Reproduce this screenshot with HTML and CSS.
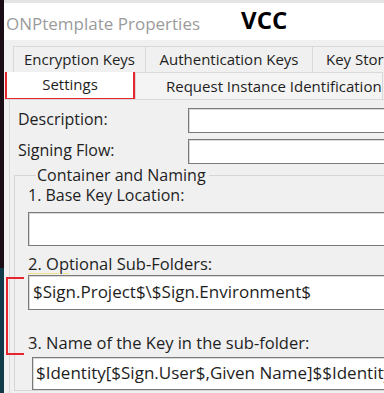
FILE: index.html
```html
<!DOCTYPE html>
<html lang="en">
<head>
    <meta charset="UTF-8">
    <title>ONPtemplate Properties</title>
    <link rel="stylesheet" href="styles.css">
</head>
<body>
    <div class="window">
        <div class="titlebar">
            <span class="title">ONPtemplate Properties</span>
            <span class="tag">VCC</span>
        </div>

        <div class="tabs">
            <div class="tab-row back">
                <div class="tab t1">Encryption Keys</div>
                <div class="tab t2">Authentication Keys</div>
                <div class="tab t3">Key Storage</div>
            </div>
            <div class="tab-row front">
                <div class="tab active">Settings</div>
                <div class="tab t4">Request Instance Identification</div>
            </div>
        </div>

        <div class="panel">
            <div class="field">
                <label class="lbl">Description:</label>
                <div class="input short"></div>
            </div>
            <div class="field">
                <label class="lbl">Signing Flow:</label>
                <div class="input short"></div>
            </div>

            <fieldset class="group">
                <legend>Container and Naming</legend>
                <div class="lbl l1">1. Base Key Location:</div>
                <div class="input i1"></div>

                <div class="lbl l2"><span class="mark">2. Op</span>tional Sub-Folders:</div>
                <div class="input i2">$Sign.Project$\$Sign.Environment$</div>

                <div class="lbl l3">3. Name of the Key in the sub-folder:</div>
                <div class="input i3">$Identity[$Sign.User$,Given Name]$$Identity[$Sign.User$,Surname]$</div>

                <!-- red bracket drawn over the form -->
                <div class="bracket"></div>
            </fieldset>
        </div>
    </div>
</body>
</html>
```

FILE: styles.css
```css
* {
    margin: 0;
    padding: 0;
    box-sizing: border-box;
}

html, body {
    width: 384px;
    height: 393px;
    overflow: hidden;
}

body {
    font-family: "Open Sans", "Liberation Sans", sans-serif;
    color: #1e1e1e;
    background: #f0f0f0 linear-gradient(#1b0d16 268px, #103a48 268px) no-repeat;
    background-size: 4px 100%;
}

.window {
    height: 393px;
    margin-left: 4px;
    background: #f0f0f0;
    display: flex;
    flex-direction: column;
    overflow: hidden;
}

.window > * {
    flex: none;
}

.titlebar {
    height: 40px;
    border-top: 3px solid #e4e4e4;
    background: #fff;
    display: flex;
    align-items: center;
    padding: 3px 0 0 2px;
    white-space: nowrap;
}

.title {
    font-size: 17px;
    color: #9b9b9b;
}

.tag {
    margin-left: 41px;
    font-size: 24px;
    font-weight: bold;
    color: #000;
    margin-top: -8px;
}

.tabs {
    margin-top: 6px;
}

.tab-row {
    display: flex;
    white-space: nowrap;
    overflow: hidden;
}

.tab {
    flex: none;
    font-size: 15px;
    text-align: center;
    border: 1px solid #d9d9d9;
    border-bottom: 0;
    background: #f0f0f0;
}

.back {
    height: 26px;
    padding-left: 9px;
}

.back .tab {
    line-height: 25px;
    margin-right: -1px;
}

.t1 { width: 133px; }
.t2 { width: 168px; }
.t3 { width: 90px; text-align: left; padding-left: 13px; }

.front {
    height: 28px;
    padding-left: 1px;
    border-bottom: 1px solid #d9d9d9;
}

.front .tab {
    line-height: 26px;
    background: #f4f4f4;
}

.active {
    width: 130px;
    background: #fff !important;
    border: 2px solid #e8242c !important;
    margin-top: -3px;
    height: 31px;
    line-height: 27px !important;
}

.t4 {
    padding-left: 30px;
    text-align: left;
}

.panel {
    flex: 1;
    margin-left: 5px;
    border-left: 1px solid #d9d9d9;
    padding: 5px 0 0 8px;
}

.field {
    display: flex;
    align-items: center;
    height: 31px;
}

.lbl {
    font-size: 16px;
    white-space: nowrap;
}

.field .lbl {
    width: 170px;
    margin-top: -3px;
}

.input {
    background: #fff;
    border: 1px solid #7a7a7a;
    box-shadow: inset 1px 1px 0 #dadada;
    font-size: 17px;
    white-space: nowrap;
    overflow: hidden;
    padding-left: 4px;
}

.short {
    flex: 1;
    height: 25px;
    margin-right: -2px;
}

.group {
    position: relative;
    border: 1px solid #d5d5d5;
    border-right: 0;
    margin: -1px 0 0 -4px;
    padding: 0 0 0 13px;
}

.group legend {
    font-size: 16px;
    margin-left: 8px;
    padding: 0 3px 0 1px;
    line-height: 18px;
}

.group .lbl {
    line-height: 22px;
}

.l1 { margin-top: 0; }
.l2 { margin-top: 7px; font-size: 16.5px !important; }
.l3 { margin-top: 22px; font-size: 16.5px !important; }

.i1 { margin-top: 6px; height: 34px; }
.i2 { margin-top: 0; height: 35px; line-height: 32px; }
.i3 {
    margin: 3px 0 0 4px;
    height: 33px;
    line-height: 30px;
    padding-left: 3px;
}

.mark {
    text-decoration: underline;
    text-decoration-color: #f2e28a;
    text-underline-offset: 3px;
}

.bracket {
    position: absolute;
    left: -9px;
    top: 93px;
    width: 18px;
    height: 78px;
    border: 2px solid #e8242c;
    border-right: 0;
}
```
